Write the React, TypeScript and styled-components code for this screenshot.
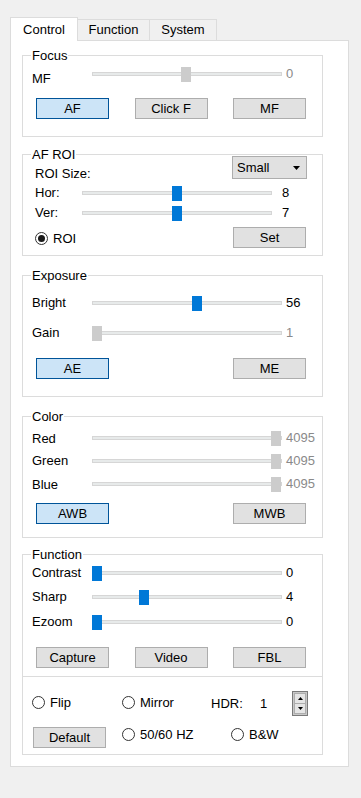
import React from "react";
import styled, { createGlobalStyle, css } from "styled-components";

const GlobalStyle = createGlobalStyle`
  html, body {
    margin: 0;
    padding: 0;
    background: #f0f0f0;
  }
  body {
    font-family: "Liberation Sans", Arial, sans-serif;
    font-size: 13px;
    line-height: 15px;
    color: #000;
  }
`;

const Window = styled.div`
  box-sizing: border-box;
  width: 361px;
  min-height: 798px;
  padding: 17px 0 0 10px;
`;

const TabBar = styled.div`
  display: flex;
  align-items: flex-end;
  height: 23px;
`;

const Tab = styled.div<{ $active?: boolean; $w: number }>`
  box-sizing: border-box;
  width: ${(p) => p.$w}px;
  height: 21px;
  margin-left: -1px;
  padding-top: 2px;
  border: 1px solid #dcdcdc;
  border-bottom: none;
  background: #f0f0f0;
  text-align: center;

  &:first-child {
    margin-left: 0;
  }

  ${(p) =>
    p.$active &&
    css`
      position: relative;
      z-index: 1;
      height: 24px;
      margin-bottom: -1px;
      padding-top: 4px;
      background: #fff;
    `}
`;

const Panel = styled.div`
  box-sizing: border-box;
  width: 339px;
  padding: 7px 0 11px 11px;
  border: 1px solid #dcdcdc;
  background: #fff;
`;

const Group = styled.fieldset<{ $h: number; $mt?: number }>`
  box-sizing: border-box;
  display: block;
  width: 301px;
  min-width: 0;
  height: ${(p) => p.$h}px;
  margin: ${(p) => p.$mt ?? 0}px 0 0;
  padding: 0 8px;
  border: 1px solid #dcdcdc;
`;

const Legend = styled.legend`
  padding: 0 1px;
  line-height: 15px;
`;

const BottomBox = styled.div`
  box-sizing: border-box;
  display: flow-root;
  width: 301px;
  height: 78px;
  padding: 0 0 0 9px;
  border: 1px solid #dcdcdc;
  border-top: none;
`;

const SliderRow = styled.div<{ $mt: number; $roi?: boolean }>`
  display: grid;
  grid-template-columns: ${(p) => (p.$roi ? 47 : 60)}px 190px auto;
  height: 15px;
  margin-top: ${(p) => p.$mt}px;
  padding-left: ${(p) => (p.$roi ? 4 : 1)}px;
`;

const RowLabel = styled.span<{ $shift: number }>`
  margin-top: ${(p) => p.$shift}px;
  white-space: nowrap;
`;

const Track = styled.div`
  position: relative;
  box-sizing: border-box;
  height: 4px;
  margin-top: 5px;
  border: 1px solid #d6d6d6;
  background: #e7eaea;
`;

const Thumb = styled.div<{ $off?: boolean }>`
  position: absolute;
  top: -6px;
  width: 10px;
  height: 15px;
  background: ${(p) => (p.$off ? "#cccccc" : "#0078d7")};
`;

const Value = styled.span<{ $off?: boolean; $roi?: boolean }>`
  margin: -1px 0 0 ${(p) => (p.$roi ? 10 : 4)}px;
  color: ${(p) => (p.$off ? "#8a8a8a" : "#000")};
`;

const ButtonRow = styled.div<{ $mt: number }>`
  display: flex;
  justify-content: space-between;
  width: 270px;
  margin: ${(p) => p.$mt}px 0 0 5px;
`;

const Button = styled.button<{ $on?: boolean }>`
  box-sizing: border-box;
  width: 73px;
  height: 21px;
  margin: 0;
  padding: 0;
  font-family: "Liberation Sans", Arial, sans-serif;
  font-size: 13px;
  font-weight: 400;
  line-height: 15px;
  color: #000;
  border: 1px solid ${(p) => (p.$on ? "#005499" : "#adadad")};
  background: ${(p) => (p.$on ? "#cce4f7" : "#e1e1e1")};
  border-radius: 0;
`;

const RoiTop = styled.div`
  display: flex;
  align-items: flex-start;
  justify-content: space-between;
  height: 23px;
  margin: -6px 7px 0 4px;
`;

const RoiSizeLabel = styled.span`
  margin-top: 10px;
`;

const Select = styled.div`
  box-sizing: border-box;
  display: flex;
  align-items: center;
  width: 75px;
  height: 23px;
  padding: 0 6px 0 4px;
  border: 1px solid #adadad;
  background: #e1e1e1;

  svg {
    margin-left: auto;
  }
`;

const RoiBottom = styled.div`
  display: flex;
  align-items: flex-start;
  margin: 6px 8px 0 4px;

  button {
    margin-left: auto;
  }
`;

const Radio = styled.label<{ $mt?: number }>`
  display: inline-flex;
  align-items: center;
  gap: 5px;
  margin-top: ${(p) => p.$mt ?? 0}px;
  white-space: nowrap;
`;

const RadioDot = styled.span<{ $checked?: boolean }>`
  box-sizing: border-box;
  display: flex;
  align-items: center;
  justify-content: center;
  width: 13px;
  height: 13px;
  border: 1px solid #333;
  border-radius: 50%;
  background: #fff;

  &::after {
    content: "";
    display: ${(p) => (p.$checked ? "block" : "none")};
    width: 7px;
    height: 7px;
    border-radius: 50%;
    background: #1a1a1a;
  }
`;

const OptionRow = styled.div<{ $mt: number; $center?: boolean }>`
  display: flex;
  align-items: ${(p) => (p.$center ? "center" : "flex-start")};
  height: ${(p) => (p.$center ? "25px" : "auto")};
  margin-top: ${(p) => p.$mt}px;
`;

const Cell = styled.div<{ $w: number; $ml?: number }>`
  flex: none;
  width: ${(p) => p.$w}px;
  margin-left: ${(p) => p.$ml ?? 0}px;
`;

const Spin = styled.div`
  box-sizing: border-box;
  display: flex;
  flex-direction: column;
  width: 16px;
  height: 25px;
  padding: 1px;
  border: 1px solid #7a7a7a;
  background: #f0f0f0;
  box-shadow: inset 0 0 0 1px #c8c8c8;
`;

const SpinHalf = styled.div`
  box-sizing: border-box;
  display: flex;
  align-items: center;
  justify-content: center;
  flex: 1;
  border: 1px solid #adadad;
  background: #e5e5e5;

  & + & {
    border-top: none;
  }
`;

type SliderProps = {
  label: string;
  value: string;
  at: number;
  mt: number;
  off?: boolean;
  roi?: boolean;
  shift?: number;
};

const Slider = ({ label, value, at, mt, off, roi, shift = -1 }: SliderProps) => (
  <SliderRow $mt={mt} $roi={roi}>
    <RowLabel $shift={shift}>{label}</RowLabel>
    <Track>
      <Thumb $off={off} style={{ left: at - 1 }} />
    </Track>
    <Value $off={off} $roi={roi}>
      {value}
    </Value>
  </SliderRow>
);

const Triangle = ({ down, w = 7, h = 4 }: { down?: boolean; w?: number; h?: number }) => (
  <svg width={w} height={h} viewBox={`0 0 ${w} ${h}`}>
    <polygon
      points={down ? `0,0 ${w},0 ${w / 2},${h}` : `0,${h} ${w},${h} ${w / 2},0`}
      fill="#000"
    />
  </svg>
);

export default function App() {
  return (
    <>
      <GlobalStyle />
      <Window>
        <TabBar>
          <Tab $active $w={68}>Control</Tab>
          <Tab $w={73}>Function</Tab>
          <Tab $w={68}>System</Tab>
        </TabBar>
        <Panel>
          <Group $h={89}>
            <Legend>Focus</Legend>
            <Slider label="MF" value="0" at={89} mt={4} off shift={4} />
            <ButtonRow $mt={16}>
              <Button $on>AF</Button>
              <Button>Click F</Button>
              <Button>MF</Button>
            </ButtonRow>
          </Group>

          <Group $h={109} $mt={10}>
            <Legend>AF ROI</Legend>
            <RoiTop>
              <RoiSizeLabel>ROI Size:</RoiSizeLabel>
              <Select>
                Small
                <Triangle down />
              </Select>
            </RoiTop>
            <Slider label="Hor:" value="8" at={90} mt={7} roi />
            <Slider label="Ver:" value="7" at={90} mt={5} roi />
            <RoiBottom>
              <Radio $mt={4}>
                <RadioDot $checked />
                ROI
              </Radio>
              <Button>Set</Button>
            </RoiBottom>
          </Group>

          <Group $h={129} $mt={12}>
            <Legend>Exposure</Legend>
            <Slider label="Bright" value="56" at={100} mt={13} />
            <Slider label="Gain" value="1" at={0} mt={15} off />
            <ButtonRow $mt={17}>
              <Button $on>AE</Button>
              <Button>ME</Button>
            </ButtonRow>
          </Group>

          <Group $h={129} $mt={12}>
            <Legend>Color</Legend>
            <Slider label="Red" value="4095" at={179} mt={7} off shift={0} />
            <Slider label="Green" value="4095" at={179} mt={8} off />
            <Slider label="Blue" value="4095" at={179} mt={8} off shift={0} />
            <ButtonRow $mt={11}>
              <Button $on>AWB</Button>
              <Button>MWB</Button>
            </ButtonRow>
          </Group>

          <Group $h={130} $mt={9}>
            <Legend>Function</Legend>
            <Slider label="Contrast" value="0" at={0} mt={4} />
            <Slider label="Sharp" value="4" at={47} mt={9} />
            <Slider label="Ezoom" value="0" at={0} mt={10} />
            <ButtonRow $mt={17}>
              <Button>Capture</Button>
              <Button>Video</Button>
              <Button>FBL</Button>
            </ButtonRow>
          </Group>

          <BottomBox>
            <OptionRow $mt={14} $center>
              <Cell $w={90}>
                <Radio>
                  <RadioDot />
                  Flip
                </Radio>
              </Cell>
              <Cell $w={89}>
                <Radio>
                  <RadioDot />
                  Mirror
                </Radio>
              </Cell>
              <Cell $w={49}>HDR:</Cell>
              <Cell $w={32}>1</Cell>
              <Spin>
                <SpinHalf>
                  <Triangle w={5} h={3} />
                </SpinHalf>
                <SpinHalf>
                  <Triangle down w={5} h={3} />
                </SpinHalf>
              </Spin>
            </OptionRow>
            <OptionRow $mt={11}>
              <Cell $w={89} $ml={1}>
                <Button>Default</Button>
              </Cell>
              <Cell $w={109}>
                <Radio>
                  <RadioDot />
                  50/60 HZ
                </Radio>
              </Cell>
              <Radio>
                <RadioDot />
                B&amp;W
              </Radio>
            </OptionRow>
          </BottomBox>
        </Panel>
      </Window>
    </>
  );
}
